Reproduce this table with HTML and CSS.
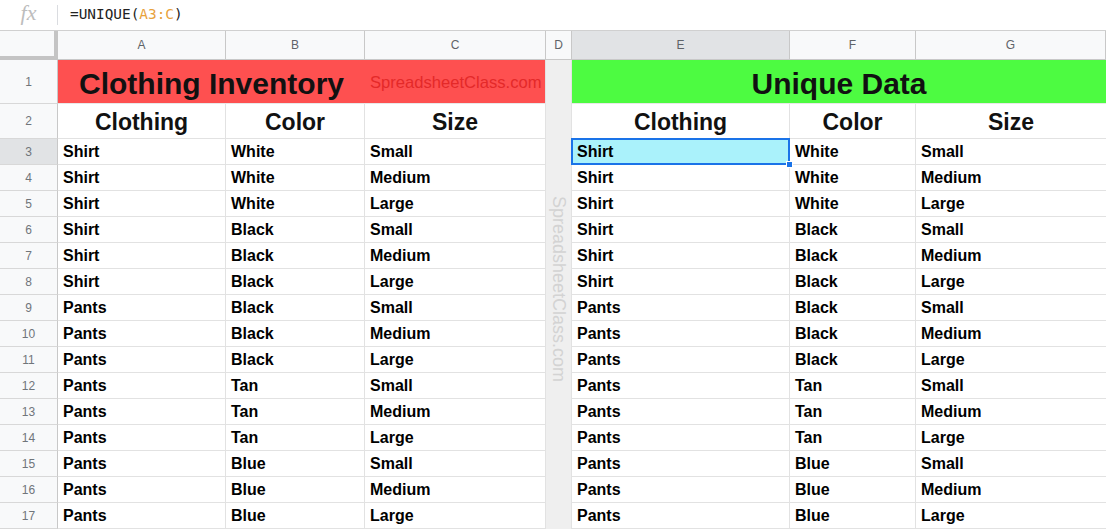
FILE: index.html
```html
<!DOCTYPE html>
<html>
<head>
<meta charset="utf-8">
<link rel="stylesheet" href="styles.css">
</head>
<body>
<div class="fbar">
  <div class="fx">fx</div>
  <div class="fsep"></div>
  <div class="formula">=UNIQUE(<span class="ref">A3:C</span>)</div>
</div>
<div class="sheet">
  <div class="corner"></div>
  <div class="ch">A</div>
  <div class="ch">B</div>
  <div class="ch">C</div>
  <div class="ch">D</div>
  <div class="ch sel">E</div>
  <div class="ch">F</div>
  <div class="ch last">G</div>

  <div class="dcol"><span class="wm">SpreadsheetClass.com</span></div>

  <div class="rh">1</div>
  <div class="c title red span3"><div class="t-main">Clothing Inventory</div><div class="t-site">SpreadsheetClass.com</div></div>
  <div class="c title green span3 last"><div class="t-center">Unique Data</div></div>

  <div class="rh">2</div>
  <div class="c hd">Clothing</div><div class="c hd">Color</div><div class="c hd">Size</div>
  <div class="c hd">Clothing</div><div class="c hd">Color</div><div class="c hd last">Size</div>

  <div class="rh sel">3</div>
  <div class="c">Shirt</div><div class="c">White</div><div class="c">Small</div>
  <div class="c active">Shirt<span class="handle"></span></div><div class="c">White</div><div class="c last">Small</div>

  <div class="rh">4</div>
  <div class="c">Shirt</div><div class="c">White</div><div class="c">Medium</div>
  <div class="c">Shirt</div><div class="c">White</div><div class="c last">Medium</div>

  <div class="rh">5</div>
  <div class="c">Shirt</div><div class="c">White</div><div class="c">Large</div>
  <div class="c">Shirt</div><div class="c">White</div><div class="c last">Large</div>

  <div class="rh">6</div>
  <div class="c">Shirt</div><div class="c">Black</div><div class="c">Small</div>
  <div class="c">Shirt</div><div class="c">Black</div><div class="c last">Small</div>

  <div class="rh">7</div>
  <div class="c">Shirt</div><div class="c">Black</div><div class="c">Medium</div>
  <div class="c">Shirt</div><div class="c">Black</div><div class="c last">Medium</div>

  <div class="rh">8</div>
  <div class="c">Shirt</div><div class="c">Black</div><div class="c">Large</div>
  <div class="c">Shirt</div><div class="c">Black</div><div class="c last">Large</div>

  <div class="rh">9</div>
  <div class="c">Pants</div><div class="c">Black</div><div class="c">Small</div>
  <div class="c">Pants</div><div class="c">Black</div><div class="c last">Small</div>

  <div class="rh">10</div>
  <div class="c">Pants</div><div class="c">Black</div><div class="c">Medium</div>
  <div class="c">Pants</div><div class="c">Black</div><div class="c last">Medium</div>

  <div class="rh">11</div>
  <div class="c">Pants</div><div class="c">Black</div><div class="c">Large</div>
  <div class="c">Pants</div><div class="c">Black</div><div class="c last">Large</div>

  <div class="rh">12</div>
  <div class="c">Pants</div><div class="c">Tan</div><div class="c">Small</div>
  <div class="c">Pants</div><div class="c">Tan</div><div class="c last">Small</div>

  <div class="rh">13</div>
  <div class="c">Pants</div><div class="c">Tan</div><div class="c">Medium</div>
  <div class="c">Pants</div><div class="c">Tan</div><div class="c last">Medium</div>

  <div class="rh">14</div>
  <div class="c">Pants</div><div class="c">Tan</div><div class="c">Large</div>
  <div class="c">Pants</div><div class="c">Tan</div><div class="c last">Large</div>

  <div class="rh">15</div>
  <div class="c">Pants</div><div class="c">Blue</div><div class="c">Small</div>
  <div class="c">Pants</div><div class="c">Blue</div><div class="c last">Small</div>

  <div class="rh">16</div>
  <div class="c">Pants</div><div class="c">Blue</div><div class="c">Medium</div>
  <div class="c">Pants</div><div class="c">Blue</div><div class="c last">Medium</div>

  <div class="rh">17</div>
  <div class="c">Pants</div><div class="c">Blue</div><div class="c">Large</div>
  <div class="c">Pants</div><div class="c">Blue</div><div class="c last">Large</div>
</div>
</body>
</html>
```

FILE: styles.css
```css
* { box-sizing: border-box; }
html, body { margin: 0; padding: 0; background: #fff; overflow: hidden; }
body { width: 1106px; height: 529px; font-family: "Liberation Sans", Arial, sans-serif; }

.fbar {
  height: 31px;
  display: flex;
  align-items: center;
  border-bottom: 1px solid #d0d0d0;
  background: #fff;
}
.fx {
  width: 57px;
  text-align: center;
  font-family: "Liberation Serif", serif;
  font-style: italic;
  font-size: 22px;
  color: #bdbdbd;
  line-height: 24px;
  padding-bottom: 5px;
}
.fsep { width: 1px; height: 20px; background: #dadce0; }
.formula {
  padding-left: 12px;
  font-family: "DejaVu Sans Mono", monospace;
  font-size: 14.4px;
  color: #222;
  padding-bottom: 2px;
}
.ref { color: #e8a23c; }

.sheet {
  display: grid;
  grid-template-columns: 58px 168px 139px 181px 26px 218px 126px 190px;
  grid-template-rows: 29px 44px 35px repeat(15, 26px);
}

.corner {
  background: #f8f9fa;
  border-right: 4px solid #c4c4c4;
  border-bottom: 4px solid #c4c4c4;
}
.ch {
  background: #f8f9fa;
  border-right: 1px solid #c8c8c8;
  border-bottom: 1px solid #c8c8c8;
  display: flex;
  align-items: center;
  justify-content: center;
  font-size: 12px;
  color: #5f6368;
}
.ch.sel { background: #e1e3e5; }

.rh {
  background: #f8f9fa;
  border-right: 1px solid #c8c8c8;
  border-bottom: 1px solid #d8d8d8;
  display: flex;
  align-items: center;
  justify-content: center;
  font-size: 12px;
  color: #70757a;
}
.rh.sel { background: #e1e3e5; }

.dcol {
  grid-column: 5;
  grid-row: 2 / span 17;
  background: #efefef;
  border-right: 1px solid #e2e2e2;
  display: flex;
  justify-content: center;
  padding-top: 136px;
}
.wm {
  writing-mode: vertical-rl;
  font-size: 18px;
  color: #d3d3d3;
  line-height: 26px;
}

.c {
  border-right: 1px solid #e2e2e2;
  border-bottom: 1px solid #e2e2e2;
  display: flex;
  align-items: center;
  padding: 1px 5px 0 5px;
  font-weight: bold;
  font-size: 16px;
  color: #000;
  white-space: nowrap;
  position: relative;
}
.c.last { border-right: none; }
.span3 { grid-column: span 3; }

.title { padding: 0; font-size: 30px; }
.red { background: #fe5050; border-right: 1px solid #e2e2e2; border-bottom: 1px solid #e8e8e8; }
.green { background: #4dfb41; border-bottom: 1px solid #e8e8e8; }
.t-main {
  width: 307px;
  text-align: center;
  color: #111;
  padding-top: 4px;
}
.t-site {
  flex: 1;
  font-weight: normal;
  font-size: 16.6px;
  color: #e42929;
  padding-left: 5px;
  padding-top: 3px;
}
.t-center {
  width: 100%;
  text-align: center;
  color: #111;
  padding-top: 4px;
}

.hd {
  justify-content: center;
  font-size: 23px;
  padding: 2px 0 0 0;
  color: #111;
}

.active {
  background: #aaf2fb;
  border: 2px solid #1a73e8;
  margin: -1px 0 0 -1px;
  padding-left: 4px;
}
.handle {
  position: absolute;
  right: -5px;
  bottom: -5px;
  width: 7px;
  height: 7px;
  background: #1a73e8;
  border: 1px solid #fff;
  z-index: 2;
}
```
